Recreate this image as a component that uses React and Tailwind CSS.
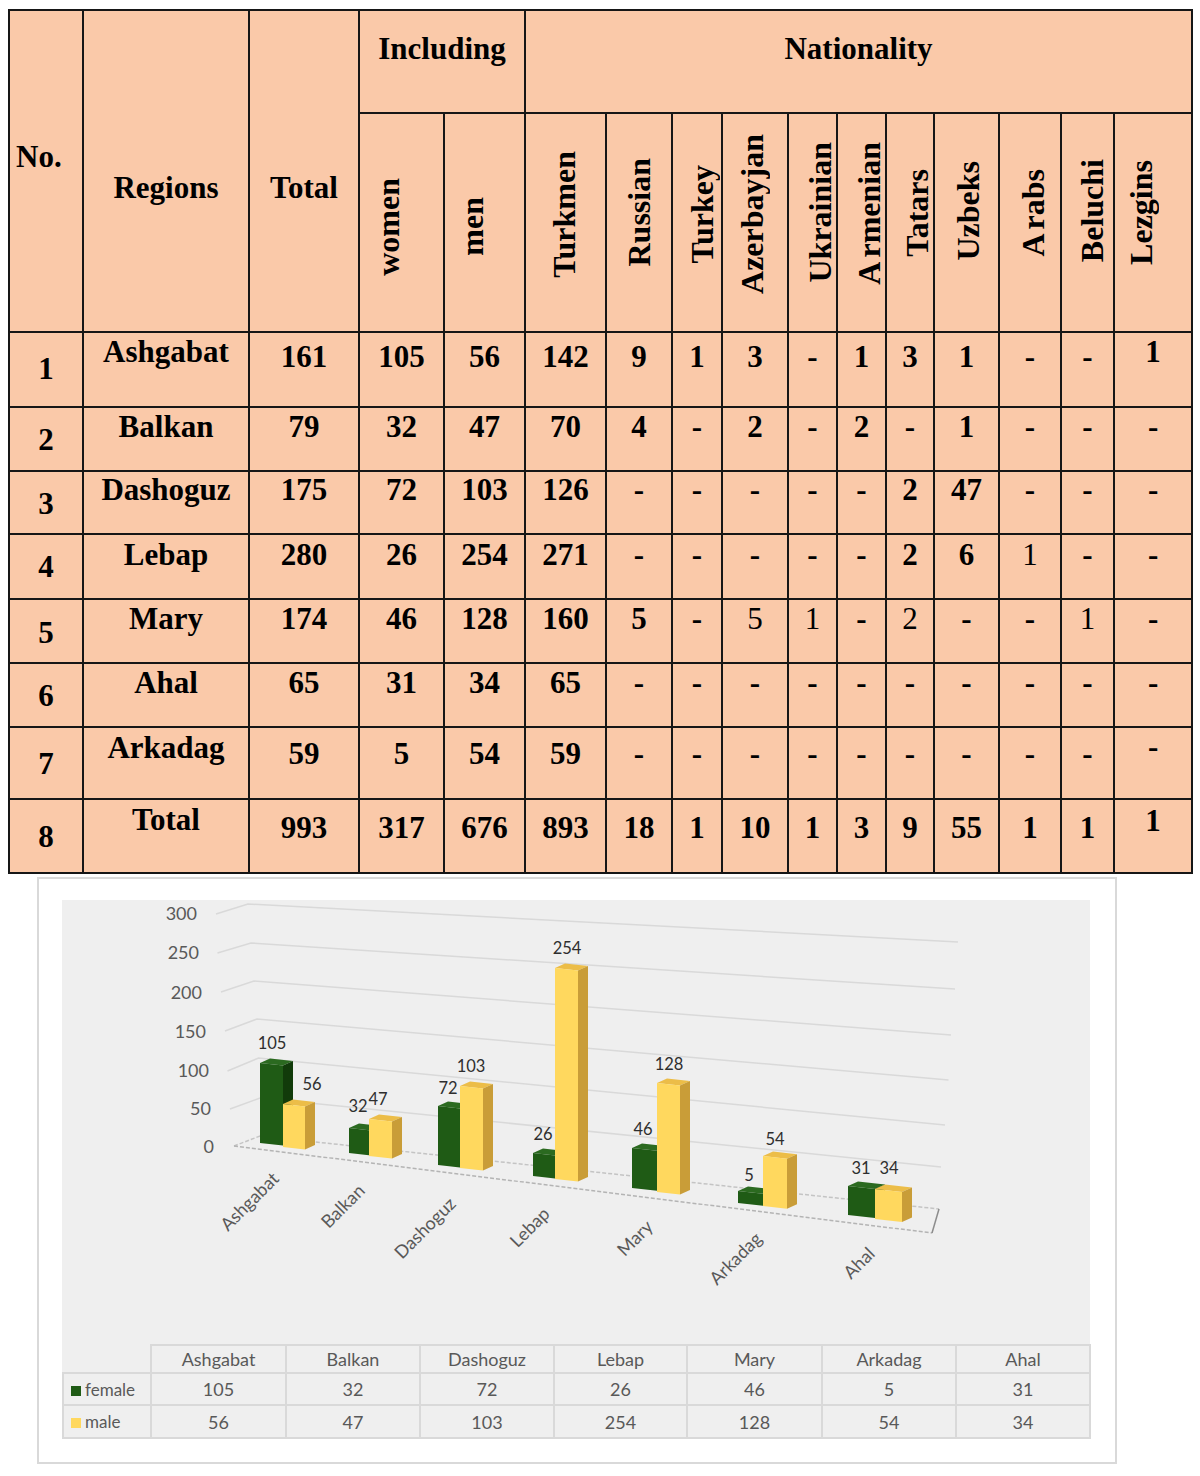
const HEAD2 = [
  { t: "women", c: "pr-[27px] pt-[14px]" },
  { t: "men", c: "pr-[26px] pt-[12px]" },
  { t: "Turkmen", c: "pr-[4px] pb-[11px]" },
  { t: "Russian", c: "pb-[15px]" },
  { t: "Turkey", c: "pl-[10px] pb-[12px]" },
  { t: "Azerbayjan", c: "pr-[7px] pb-[13px]" },
  { t: "Ukrainian", c: "pl-[15px] pb-[15px]" },
  { t: "Armenian", c: "pl-[14px] pb-[13px]", gap: true },
  { t: "Tatars", c: "pl-[13px] pb-[15px]" },
  { t: "Uzbeks", c: "pl-[2px] pb-[18px]" },
  { t: "Arabs", c: "pl-[5px] pb-[14px]", gap: true },
  { t: "Beluchi", c: "pl-[8px] pb-[18px]" },
  { t: "Lezgins", c: "pr-[25px] pb-[16px]" },
];

// "r:" = regular weight in the source table
const ROWS = [
  { h: "h-[75px]", no: "pt-[20px]", name: "pt-[3px]", num: "pt-[8px]", last: "pt-[3px]", n: "1", region: "Ashgabat",
    v: ["161", "105", "56", "142", "9", "1", "3", "-", "1", "3", "1", "-", "-", "1"] },
  { h: "h-[64px]", no: "pt-[16px]", name: "pt-[3px]", num: "pt-[3px]", last: "pt-[3px]", n: "2", region: "Balkan",
    v: ["79", "32", "47", "70", "4", "-", "2", "-", "2", "-", "1", "-", "-", "-"] },
  { h: "h-[63px]", no: "pt-[16px]", name: "pt-[2px]", num: "pt-[2px]", last: "pt-[2px]", n: "3", region: "Dashoguz",
    v: ["175", "72", "103", "126", "-", "-", "-", "-", "-", "2", "47", "-", "-", "-"] },
  { h: "h-[65px]", no: "pt-[16px]", name: "pt-[4px]", num: "pt-[4px]", last: "pt-[4px]", n: "4", region: "Lebap",
    v: ["280", "26", "254", "271", "-", "-", "-", "-", "-", "2", "6", "r:1", "-", "-"] },
  { h: "h-[64px]", no: "pt-[17px]", name: "pt-[3px]", num: "pt-[3px]", last: "pt-[3px]", n: "5", region: "Mary",
    v: ["174", "46", "128", "160", "5", "-", "r:5", "r:1", "-", "r:2", "-", "-", "r:1", "-"] },
  { h: "h-[64px]", no: "pt-[16px]", name: "pt-[3px]", num: "pt-[3px]", last: "pt-[3px]", n: "6", region: "Ahal",
    v: ["65", "31", "34", "65", "-", "-", "-", "-", "-", "-", "-", "-", "-", "-"] },
  { h: "h-[72px]", no: "pt-[20px]", name: "pt-[4px]", num: "pt-[10px]", last: "pt-[3px]", n: "7", region: "Arkadag",
    v: ["59", "5", "54", "59", "-", "-", "-", "-", "-", "-", "-", "-", "-", "-"] },
  { h: "h-[74px]", no: "pt-[21px]", name: "pt-[4px]", num: "pt-[12px]", last: "pt-[5px]", n: "8", region: "Total",
    v: ["993", "317", "676", "893", "18", "1", "10", "1", "3", "9", "55", "1", "1", "1"] },
];

const COLS = [74, 166, 110, 85, 81, 81, 66, 50, 66, 49, 49, 48, 65, 62, 53, 78];

const cell = "border-2 border-[#161616]";

function Census() {
  return (
    <table className="w-[1183px] table-fixed border-collapse bg-[#fac9a9] font-['Liberation_Serif',serif] text-[31px] font-bold leading-none text-black">
      <colgroup>
        {COLS.map((w, i) => (
          <col key={i} style={{ width: w }} />
        ))}
      </colgroup>
      <thead>
        <tr className="h-[103px]">
          <th rowSpan={2} className={`${cell} pb-[30px] pl-[6px] text-left align-middle`}>No.</th>
          <th rowSpan={2} className={`${cell} pt-[32px] align-middle`}>Regions</th>
          <th rowSpan={2} className={`${cell} pt-[32px] align-middle`}>Total</th>
          <th colSpan={2} className={`${cell} pb-[26px] align-middle`}>Including</th>
          <th colSpan={11} className={`${cell} pb-[26px] align-middle`}>Nationality</th>
        </tr>
        <tr className="h-[219px]">
          {HEAD2.map((h) => (
            <th key={h.t} className={`${cell} ${h.c} text-center align-middle text-[32px]`}>
              <div className="inline-block rotate-180 leading-none [writing-mode:vertical-rl]">
                {h.gap ? (
                  <>
                    <span className="mb-[4px] inline-block">{h.t[0]}</span>
                    {h.t.slice(1)}
                  </>
                ) : (
                  h.t
                )}
              </div>
            </th>
          ))}
        </tr>
      </thead>
      <tbody>
        {ROWS.map((r) => (
          <tr key={r.n} className={r.h}>
            <td className={`${cell} ${r.no} text-center align-top`}>{r.n}</td>
            <td className={`${cell} ${r.name} text-center align-top`}>{r.region}</td>
            {r.v.map((v, i) => {
              const reg = v.startsWith("r:");
              const txt = reg ? v.slice(2) : v;
              const pad = i === r.v.length - 1 ? r.last : r.num;
              return (
                <td key={i} className={`${cell} ${pad} text-center align-top ${reg ? "font-normal" : ""}`}>
                  {txt}
                </td>
              );
            })}
          </tr>
        ))}
      </tbody>
    </table>
  );
}

const GREEN = { front: "#1f5b15", side: "#113b0a", top: "#2b6a20" };
const GOLD = { front: "#ffd85e", side: "#c99d38", top: "#ecbd48" };

const BARS = [
  { g: [260, 283, 1062, 1142], y: [283, 305, 1103, 1146] },
  { g: [349, 369, 1127, 1152], y: [369, 392, 1118, 1155] },
  { g: [438, 460, 1105, 1164], y: [460, 483, 1085, 1167] },
  { g: [533, 555, 1152, 1175], y: [555, 578, 967, 1178] },
  { g: [632, 657, 1147, 1187], y: [657, 680, 1082, 1191] },
  { g: [738, 763, 1190, 1202], y: [763, 787, 1155, 1205] },
  { g: [848, 875, 1185, 1214], y: [875, 902, 1188, 1218] },
];

const GRID = [
  [216, 913, 248, 903, 958, 941],
  [217.5, 952, 251, 942, 955, 988],
  [221, 991, 254, 980, 951, 1034],
  [225, 1030, 257, 1018, 948.5, 1079],
  [227.5, 1070, 258.6, 1057, 945, 1124],
  [230, 1108, 260, 1097, 941, 1166],
];

const YLAB = [
  ["300", 197, 912],
  ["250", 199, 951.5],
  ["200", 202, 991],
  ["150", 206, 1030],
  ["100", 209, 1069],
  ["50", 211, 1107],
  ["0", 214, 1145],
];

const VLAB = [
  ["105", 272, 1042], ["56", 312, 1083], ["32", 358, 1105], ["47", 378, 1098],
  ["72", 448, 1087], ["103", 471, 1065], ["26", 543, 1133], ["254", 567, 947],
  ["46", 643, 1128], ["128", 669, 1063], ["5", 749, 1174], ["54", 775, 1138],
  ["31", 861, 1167], ["34", 889, 1167],
];

const XLAB = [
  ["Ashgabat", 280, 1179], ["Balkan", 366, 1191], ["Dashoguz", 457, 1204], ["Lebap", 551, 1214],
  ["Mary", 654, 1227], ["Arkadag", 763, 1239], ["Ahal", 876, 1254],
];

function Bar3D({ b, c }) {
  const [x1, x2, yt, yb] = b;
  const s = 0.11;
  const w = x2 - x1;
  const dx = 10;
  const dy = -4.5;
  const yt2 = yt + s * w;
  const yb2 = yb + s * w;
  const pts = (a) => a.map((p) => p.join(",")).join(" ");
  return (
    <g>
      <polygon points={pts([[x1, yt], [x1 + dx, yt + dy], [x2 + dx, yt2 + dy], [x2, yt2]])} fill={c.top} />
      <polygon points={pts([[x2, yt2], [x2 + dx, yt2 + dy], [x2 + dx, yb2 + dy], [x2, yb2]])} fill={c.side} />
      <polygon points={pts([[x1, yt], [x2, yt2], [x2, yb2], [x1, yb]])} fill={c.front} />
    </g>
  );
}

function Chart3D() {
  const font = "Lato, 'Open Sans', sans-serif";
  return (
    <svg viewBox="62 899 1028 444" width="1028" height="444" className="block">
      {GRID.map((g, i) => (
        <polyline key={i} points={`${g[0]},${g[1]} ${g[2]},${g[3]} ${g[4]},${g[5]}`} fill="none" stroke="#d9d9d9" strokeWidth="1.5" />
      ))}
      {/* floor */}
      <polyline points="234,1145 260,1135 939,1208" fill="none" stroke="#c4c4c4" strokeWidth="1.5" strokeDasharray="4 2" />
      <line x1="234" y1="1145" x2="932" y2="1232" stroke="#b4b4b4" strokeWidth="1.5" strokeDasharray="4 2" />
      <line x1="932" y1="1232" x2="939" y2="1208" stroke="#8c8c8c" strokeWidth="1.5" />

      {BARS.map((b, i) => (
        <g key={i}>
          <Bar3D b={b.g} c={GREEN} />
          <Bar3D b={b.y} c={GOLD} />
        </g>
      ))}

      {YLAB.map(([t, x, y]) => (
        <text key={t} x={x} y={y + 6.5} textAnchor="end" fontSize="18" fill="#595959" fontFamily={font}>
          {t}
        </text>
      ))}
      {VLAB.map(([t, x, y], i) => (
        <text key={i} x={x} y={y + 6} textAnchor="middle" fontSize="16.5" fill="#2e2e2e" fontFamily={font}>
          {t}
        </text>
      ))}
      {XLAB.map(([t, x, y]) => (
        <text key={t} x={x} y={y} textAnchor="end" fontSize="18" fill="#595959" fontFamily={font} transform={`rotate(-45 ${x} ${y})`}>
          {t}
        </text>
      ))}
    </svg>
  );
}

const REGIONS = ["Ashgabat", "Balkan", "Dashoguz", "Lebap", "Mary", "Arkadag", "Ahal"];
const FEMALE = [105, 32, 72, 26, 46, 5, 31];
const MALE = [56, 47, 103, 254, 128, 54, 34];
const DCOLS = [88, 135, 134, 134, 133, 135, 134, 134];

function DataTable() {
  const td = "border-2 border-[#d9d9d9] text-center align-middle";
  return (
    <table className="w-[1027px] table-fixed border-collapse font-['Lato',sans-serif] text-[18px] leading-none text-[#595959]">
      <colgroup>
        {DCOLS.map((w, i) => (
          <col key={i} style={{ width: w }} />
        ))}
      </colgroup>
      <tbody>
        <tr className="h-[28px]">
          <td />
          {REGIONS.map((r) => (
            <td key={r} className={td}>{r}</td>
          ))}
        </tr>
        <tr className="h-[32px]">
          <td className="border-2 border-[#d9d9d9] pl-[7px] text-left align-middle text-[17px]">
            <span className="mr-[4px] inline-block h-[10px] w-[10px] bg-[#1f5b15]" />
            female
          </td>
          {FEMALE.map((v, i) => (
            <td key={i} className={td}>{v}</td>
          ))}
        </tr>
        <tr className="h-[33px]">
          <td className="border-2 border-[#d9d9d9] pl-[7px] text-left align-middle text-[17px]">
            <span className="mr-[4px] inline-block h-[10px] w-[10px] bg-[#ffd85e]" />
            male
          </td>
          {MALE.map((v, i) => (
            <td key={i} className={td}>{v}</td>
          ))}
        </tr>
      </tbody>
    </table>
  );
}

export default function App() {
  return (
    <div className="h-[1476px] w-[1200px] overflow-hidden bg-white pl-[8px] pt-[9px]">
      <Census />
      <div className="ml-[29px] mt-[3px] h-[587px] w-[1080px] border-2 border-[#d9d9d9] bg-white pl-[23px] pt-[21px]">
        <div className="w-[1028px] bg-[#efefef]">
          <Chart3D />
          <DataTable />
        </div>
      </div>
    </div>
  );
}
